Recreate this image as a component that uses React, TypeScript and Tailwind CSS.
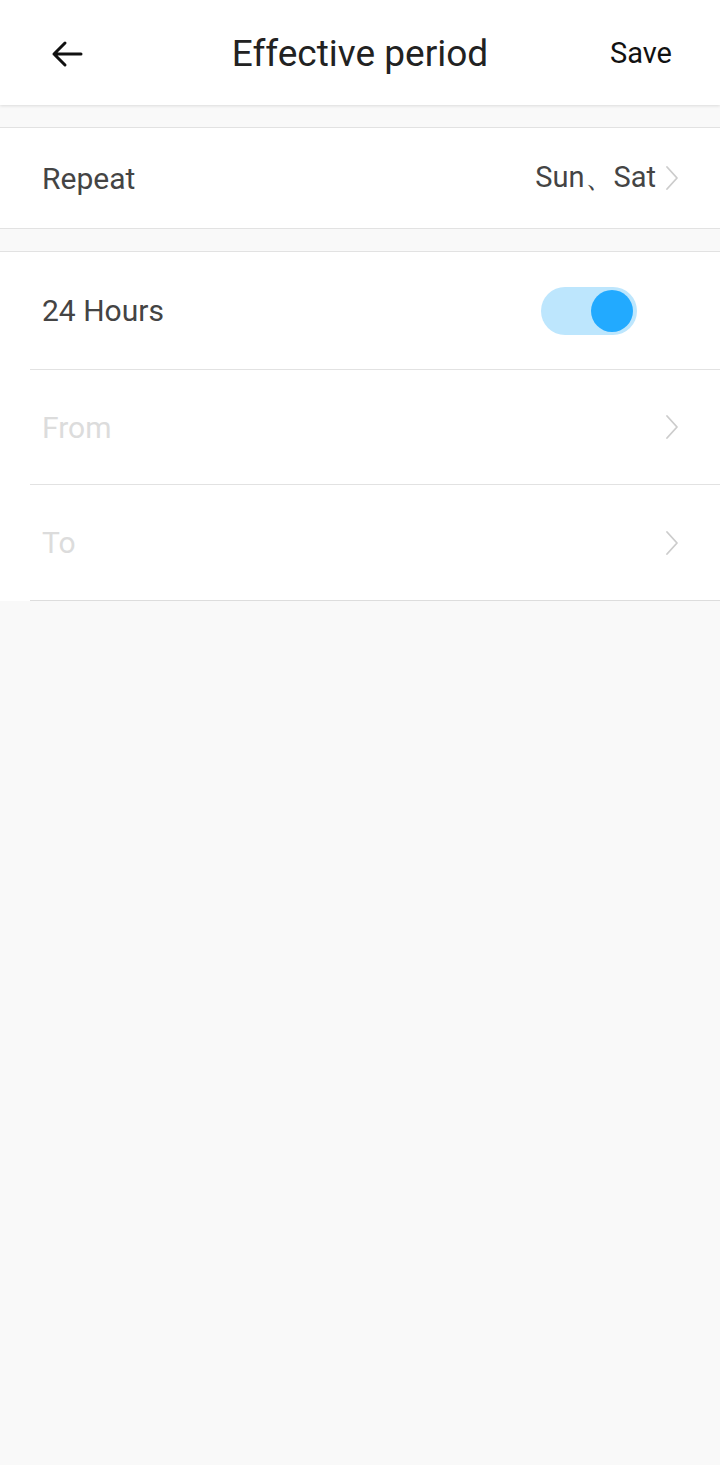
import React from "react";

function Chevron({ className }: { className?: string }) {
  return (
    <svg width="16" height="26" viewBox="0 0 16 26" className={className} fill="none">
      <path d="M3 2 L13 13 L3 24" stroke="currentColor" strokeWidth="1.8" strokeLinecap="round" strokeLinejoin="round" />
    </svg>
  );
}

export default function App() {
  return (
    <div className="min-h-[1465px] bg-[#f9f9f9] font-['Roboto',sans-serif]">
      {/* Header */}
      <div className="relative flex h-[105px] items-center bg-white pt-[3px] shadow-[0_1px_3px_rgba(0,0,0,0.12)]">
        <div className="pl-[50px]">
          <svg width="34" height="30" viewBox="0 0 34 30" fill="none">
            <path d="M31 15 H4 M15 4 L4 15 L15 26" stroke="#111" strokeWidth="3" strokeLinecap="round" strokeLinejoin="round" />
          </svg>
        </div>
        <h1 className="absolute left-0 right-0 text-center text-[37px] text-[#222]">Effective period</h1>
        <span className="ml-auto pr-[48px] text-[29px] text-[#111]">Save</span>
      </div>

      <div className="h-[22px]" />

      {/* Repeat */}
      <div className="flex h-[102px] items-center border-y border-[#e2e2e2] bg-white pl-[42px] pr-[40px]">
        <span className="text-[30px] text-[#444]">Repeat</span>
        <span className="ml-auto text-[29px] text-[#444]">Sun、Sat</span>
        <Chevron className="ml-[8px] text-[#cccccc]" />
      </div>

      <div className="h-[22px]" />

      {/* Time section */}
      <div className="border-t border-[#e2e2e2] bg-white">
        <div className="ml-[30px] flex h-[118px] items-center border-b border-[#e2e2e2] pl-[12px] pr-[83px]">
          <span className="text-[30px] text-[#444]">24 Hours</span>
          <div className="ml-auto flex h-[48px] w-[96px] items-center justify-end rounded-full bg-[#bde6fd] pr-[4px]">
            <div className="h-[42px] w-[42px] rounded-full bg-[#22aaff]" />
          </div>
        </div>
        <div className="ml-[30px] flex h-[115px] items-center border-b border-[#e2e2e2] pl-[12px] pr-[40px]">
          <span className="text-[30px] text-[#dcdcdc]">From</span>
          <Chevron className="ml-auto text-[#cccccc]" />
        </div>
        <div className="ml-[30px] flex h-[116px] items-center border-b border-[#dddddd] pl-[12px] pr-[40px]">
          <span className="text-[30px] text-[#dcdcdc]">To</span>
          <Chevron className="ml-auto text-[#cccccc]" />
        </div>
      </div>
    </div>
  );
}
